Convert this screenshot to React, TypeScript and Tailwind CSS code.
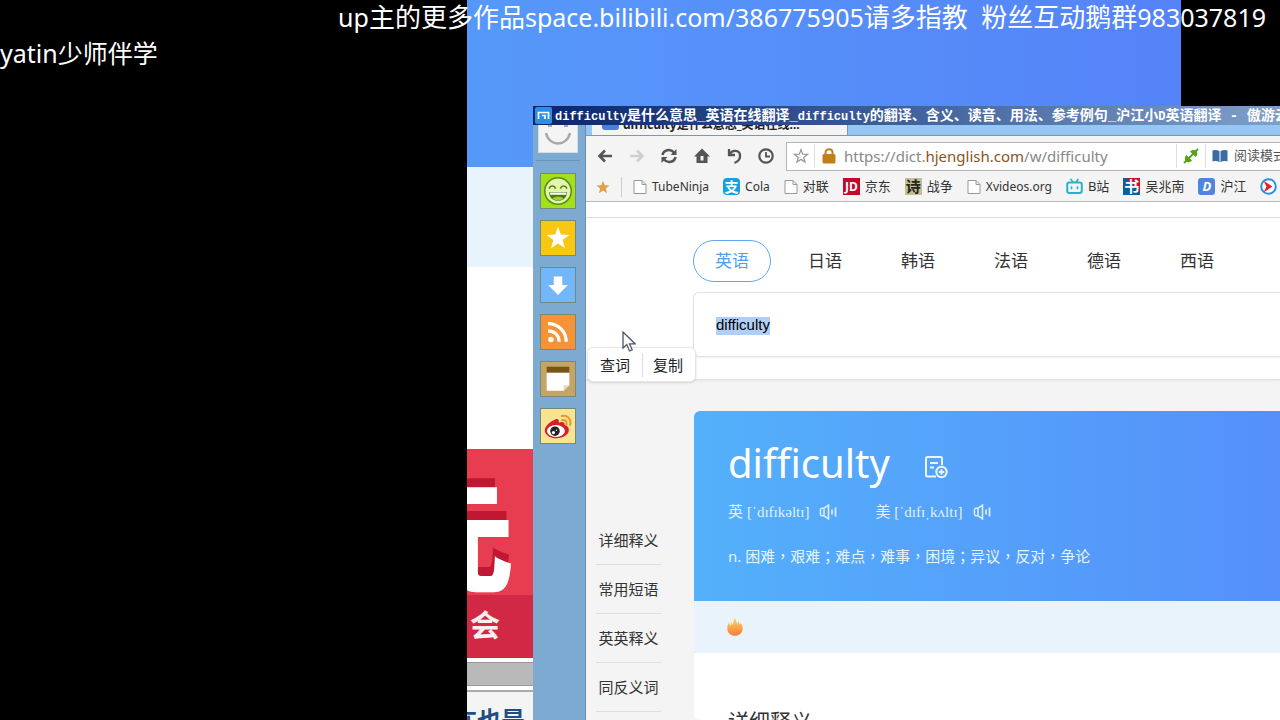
import type { ReactNode } from "react";

const CJK = "font-['Noto_Sans','Noto_Sans_CJK_SC',sans-serif]";

function DocIcon() {
  return (
    <svg viewBox="0 0 14 16" className="h-4 w-3.5 shrink-0" fill="#fff" stroke="#999" strokeWidth="1">
      <path d="M1 1.500h8l4 4v9H1zM9 1.500v4h4" />
    </svg>
  );
}

function SmileBox() {
  return (
    <svg viewBox="0 0 36 36" className="size-full">
      <circle cx="18" cy="18" r="14" fill="#e3f7ab" stroke="#5c8a1f" strokeWidth="1.600" />
      <path d="M8.500 15.500c1.500-3.600 5.500-3.600 7 0M20.500 15.500c1.500-3.600 5.500-3.600 7 0" fill="none" stroke="#55801c" strokeWidth="1.600" />
      <path d="M8.500 19h19c0 6-4 9.300-9.500 9.300S8.500 25 8.500 19z" fill="#4c7a14" />
      <path d="M9.200 19.500h17.600v2.500H9.600z" fill="#fff" />
      <path d="M12 26c3-2.500 9-2.500 12 0-3 2.600-9 2.600-12 0z" fill="#9ed03c" />
    </svg>
  );
}

function StarBox() {
  return (
    <svg viewBox="0 0 36 36" className="size-full">
      <path fill="#fff" d="M18 6l3 8.400 9 .3-7.100 5.500 2.500 8.600L18 23.800l-7.400 5 2.500-8.600L6 14.700l9-.3z" />
    </svg>
  );
}

function DownBox() {
  return (
    <svg viewBox="0 0 36 36" className="size-full">
      <path fill="#fff" d="M13.500 9h9v9h6L18 28.500 7.500 18h6z" />
    </svg>
  );
}

function FeedBox() {
  return (
    <svg viewBox="0 0 36 36" className="size-full" fill="none" stroke="#fff" strokeWidth="3.400">
      <circle cx="10.500" cy="26" r="2.900" fill="#fff" stroke="none" />
      <path d="M7.500 16.700c7 0 11.700 4.700 11.700 11.700M7.500 9.200c11 0 19.200 8.200 19.200 19.200" />
    </svg>
  );
}

function NoteBox() {
  return (
    <svg viewBox="0 0 36 36" className="size-full">
      <path fill="#7a5414" d="M6 5h24v6.500H6z" />
      <path fill="#fff" d="M6 11.500h24v13l-6 6H6z" />
      <path fill="#e3d9c2" d="M30 24.500l-6 6v-6z" />
    </svg>
  );
}

function WeiboBox() {
  return (
    <svg viewBox="0 0 36 36" className="size-full">
      <path fill="#d71f2a" d="M15 11c3-1 4.500.5 3.800 3.500 3-1.400 7-1.200 6.200 2.500 3 .9 4.500 2.600 4.500 5.300 0 4.700-6 8.700-13 8.700S4 27.500 4 22.500C4 18 10.500 12.500 15 11z" />
      <ellipse cx="15.800" cy="23.300" rx="9.500" ry="6.300" fill="#fff" />
      <circle cx="14.800" cy="23.500" r="5" fill="#222" />
      <circle cx="13.200" cy="25" r="1.700" fill="#fff" />
      <circle cx="16.400" cy="22.600" r=".8" fill="#fff" />
      <path d="M22.500 11.800c3.200-.6 5.300 1.600 4.500 4.800M22 7.500c6.300-1.400 10.500 3.300 8.800 9.300" fill="none" stroke="#e69a2e" strokeWidth="2.200" strokeLinecap="round" />
    </svg>
  );
}

const launchers: { label: string; tone: string; icon: ReactNode }[] = [
  { label: "表情", tone: "bg-[#a3e01c]", icon: <SmileBox /> },
  { label: "收藏", tone: "bg-[#f8c712]", icon: <StarBox /> },
  { label: "下载", tone: "bg-[#73b6fb]", icon: <DownBox /> },
  { label: "订阅", tone: "bg-[#f59336]", icon: <FeedBox /> },
  { label: "笔记", tone: "bg-[#c4a565]", icon: <NoteBox /> },
  { label: "微博", tone: "bg-[#fbe391]", icon: <WeiboBox /> },
];

function Launcher() {
  return (
    <aside className="flex w-[53px] shrink-0 flex-col items-center border-r border-[#6c8fb0] bg-[#7caad1] pr-0.5">
      <div className="flex h-7 w-10 shrink-0 justify-center border border-t-0 border-[#d5dde4] bg-[#f4f4f4]">
        <svg viewBox="0 0 40 28" className="h-7 w-10 shrink-0" fill="none" stroke="#a9a9a9">
          <path d="M8 8c3 14 21 14 24 0" strokeWidth="2.500" />
          <path d="M12 0v2M28 0v2" strokeWidth="4" />
        </svg>
      </div>
      <div className="mt-[7px] mb-3 h-px w-11 shrink-0 bg-[#6b93b8]" />
      <div className="flex flex-col gap-[11px]">
        {launchers.map((l) => (
          <button key={l.label} aria-label={l.label} className={`size-9 shrink-0 border border-[#748a78] ${l.tone}`}>
            {l.icon}
          </button>
        ))}
      </div>
    </aside>
  );
}

function TitleBar() {
  return (
    <header className="flex h-[19px] shrink-0 items-center overflow-hidden bg-linear-to-r from-[#0a246a] to-[#7f9fca] pl-0.5 whitespace-nowrap text-white">
      <svg viewBox="0 0 17 17" className="mr-[3px] size-[17px] shrink-0">
        <rect width="17" height="17" rx="2" fill="#2b8fe6" />
        <path d="M3.500 12V5.500h10V12M10 12V8.500H7" fill="none" stroke="#fff" strokeWidth="1.700" />
      </svg>
      <h2 className="pt-0.5 font-['Liberation_Mono','Noto_Sans_CJK_SC',monospace] text-[14px] leading-[17px] font-bold">
        <span className="text-[12px]">difficulty</span>是什么意思_英语在线翻译_
        <span className="text-[12px]">difficulty</span>的翻译、含义、读音、用法、参考例句_沪江小<span className="text-[12px]">D</span>英语翻译 - 傲游云浏览器
      </h2>
    </header>
  );
}

function TabStrip() {
  return (
    <div className="flex h-[11px] shrink-0 overflow-hidden border-b border-[#7d97ae] bg-[#95c7f5] pl-1.5">
      <div className="-mb-px flex h-[11px] w-64 items-end gap-1 overflow-hidden border-r border-[#7d97ae] bg-[#f4f4f4] pl-2.5 text-[12px] leading-[18px] font-bold whitespace-nowrap text-[#222]">
        <svg viewBox="0 0 17 17" className="mb-1.5 size-[17px] shrink-0">
          <rect width="17" height="17" rx="3" fill="#4a7fdc" />
        </svg>
        <span className="mb-0.5">difficulty是什么意思_英语在线...</span>
      </div>
    </div>
  );
}

function ToolButton({ label, dim, children }: { label: string; dim?: boolean; children: ReactNode }) {
  return (
    <button aria-label={label} className={dim ? "text-[#cfcfcf]" : "text-[#555]"}>
      <svg viewBox="0 0 18 18" className="size-[18px]" fill="none" stroke="currentColor" strokeWidth="2.600">
        {children}
      </svg>
    </button>
  );
}

function Toolbar() {
  return (
    <div className="flex h-9 shrink-0 items-center bg-[#f4f4f4] pt-1 pl-2.5">
      <div className="mr-3 flex gap-3.5">
        <ToolButton label="后退">
          <path d="M16 9H4M9 3.500L3.500 9 9 14.500" />
        </ToolButton>
        <ToolButton label="前进" dim>
          <path d="M2 9h12M9 3.500L14.500 9 9 14.500" />
        </ToolButton>
        <ToolButton label="刷新">
          <path d="M2.500 8C3.500 2.500 10.500 1.500 14 5.500M15.500 10c-1 5.500-8 6.500-11.500 2.500" />
          <path d="M16.500 2v6h-6zM1.500 16v-6h6z" fill="currentColor" stroke="none" />
        </ToolButton>
        <ToolButton label="主页">
          <path d="M10 1.500l8 8h-2.500V16h-11V9.500H2z" fill="currentColor" stroke="none" />
          <path d="M8.500 9h3v4.500h-3z" fill="#f4f4f4" stroke="none" />
        </ToolButton>
        <ToolButton label="恢复">
          <path d="M5 2v6h6M5 8C8 2 15.500 3 16 8c.5 4-1.500 6.500-5.500 8" strokeWidth="2.300" />
        </ToolButton>
        <ToolButton label="历史">
          <circle cx="10" cy="9" r="6.700" strokeWidth="2.200" />
          <path d="M10 5v4.500h4" strokeWidth="1.800" />
        </ToolButton>
      </div>
      <div className="flex h-[29px] min-w-0 flex-1 items-center border border-r-0 border-[#b5b5b5] bg-white">
        <button aria-label="收藏" className="flex h-6 w-7 shrink-0 items-center justify-center border-r border-[#ddd]">
          <svg viewBox="0 0 16 16" className="size-4" fill="none" stroke="#999" strokeWidth="1.300">
            <path d="M8 1.700l1.700 4.500 4.800.2-3.800 3 1.300 4.600-4-2.600L4 14l1.300-4.600-3.800-3 4.800-.2z" />
          </svg>
        </button>
        <svg viewBox="0 0 14 16" className="mx-[7px] h-4 w-3.5 shrink-0">
          <path d="M3.500 8V4.500c0-4.300 7-4.300 7 0V8" fill="none" stroke="#c17f1c" strokeWidth="2" />
          <rect x=".5" y="6" width="13" height="9.500" rx="1.500" fill="#c17f1c" />
        </svg>
        <p className="min-w-0 flex-1 truncate pl-px text-[15px] text-[#888]">
          https://dict.<span className="text-[#8a5523]">hjenglish.com</span>/w/difficulty
        </p>
        <button aria-label="扩展" className="flex h-6 w-[30px] shrink-0 items-center justify-center border-x border-[#ddd]">
          <svg viewBox="0 0 16 16" className="size-4">
            <path d="M1 15L15 1" stroke="#58a11e" strokeWidth="1.800" />
            <path d="M7 3.500l5.500 5.500c2-1.500 2.300-4 1-6.200C11.500 1.500 8.500 1.500 7 3.500zM3.500 7L9 12.500c-1.500 2-4 2.300-6.200 1C1.500 11 1.500 8.500 3.500 7z" fill="#58a11e" />
          </svg>
        </button>
        <button className="flex w-[74px] shrink-0 items-center gap-1.5 overflow-hidden pl-1.5 text-[13px] whitespace-nowrap text-[#555]">
          <svg viewBox="0 0 16 14" className="h-3.5 w-4 shrink-0" fill="#3b6ba5">
            <path d="M.5 1.500c2.500-1 5-.7 7 .7v11c-2-1.300-4.500-1.500-7-.7zM15.500 1.500c-2.500-1-5-.7-7 .7v11c2-1.300 4.500-1.500 7-.7z" />
          </svg>
          阅读模式
        </button>
      </div>
    </div>
  );
}

const bookmarks: { name: string; icon: ReactNode }[] = [
  { name: "TubeNinja", icon: <DocIcon /> },
  {
    name: "Cola",
    icon: (
      <span className="flex size-[17px] items-center justify-center rounded-sm bg-[#14a0e0] text-[14px] leading-none font-bold text-white">支</span>
    ),
  },
  { name: "对联", icon: <DocIcon /> },
  {
    name: "京东",
    icon: <span className="flex size-[17px] items-center justify-center bg-[#c3082a] text-[12px] leading-none font-bold text-white">JD</span>,
  },
  {
    name: "战争",
    icon: <span className="flex size-[17px] items-center justify-center bg-[#c6bd94] text-[15px] leading-none font-bold text-[#23281c]">诗</span>,
  },
  { name: "Xvideos.org", icon: <DocIcon /> },
  {
    name: "B站",
    icon: (
      <svg viewBox="0 0 17 17" className="size-[17px]" fill="none" stroke="#27b1cc" strokeWidth="2" strokeLinecap="round">
        <rect x="1.200" y="4.500" width="14.600" height="10.500" rx="2.200" />
        <path d="M5 1.500l2 2.500M12 1.500L10 4M5.500 9v1.500M11.500 9v1.500" strokeWidth="1.700" />
      </svg>
    ),
  },
  {
    name: "吴兆南",
    icon: (
      <span className="flex size-[17px] items-center justify-center bg-linear-to-tr from-[#0b5f9e] from-60% to-[#d01030] to-60% text-[15px] leading-none font-bold text-white">书</span>
    ),
  },
  {
    name: "沪江",
    icon: (
      <span className="flex size-[17px] items-center justify-center rounded-[3px] bg-[#4f86dd] text-[13px] leading-none font-bold text-white italic">D</span>
    ),
  },
  {
    name: "杨",
    icon: (
      <svg viewBox="0 0 17 17" className="size-[17px]">
        <circle cx="8.500" cy="8.500" r="7.300" fill="#fff" stroke="#2b8fe0" strokeWidth="2" />
        <path d="M5.500 5l5.500 3.500-5.500 3.700 1.800-3.700z" fill="#e5202c" stroke="#e5202c" strokeWidth="1.500" />
      </svg>
    ),
  },
];

function Bookmarks() {
  return (
    <nav aria-label="书签" className="flex h-[30px] shrink-0 items-center overflow-hidden border-b border-[#b9b9b9] bg-[#f4f4f4] pl-2.5 text-[12px] whitespace-nowrap text-[#333]">
      <svg viewBox="0 0 16 16" className="size-3.5 shrink-0" fill="#dc9f4a">
        <path d="M8 .8l2 5.200 5.500.2-4.300 3.400 1.500 5.400L8 11.900 3.300 15l1.500-5.400L.5 6.200 6 6z" />
      </svg>
      <div className="mx-[11px] h-5 w-px shrink-0 bg-[#ccc]" />
      <div className="flex gap-3.5">
        {bookmarks.map((b) => (
          <a key={b.name} href="#" className="flex shrink-0 items-center gap-[5px]">
            {b.icon}
            <span className={/^[TCX]/.test(b.name) ? "text-[12px]" : "text-[13px]"}>{b.name}</span>
          </a>
        ))}
      </div>
    </nav>
  );
}

function Speaker() {
  return (
    <button aria-label="发音">
      <svg viewBox="0 0 18 16" className="h-4 w-[18px]" fill="none" stroke="#d8ecff" strokeWidth="1.600">
        <path d="M5 4.200H2.500c-1.500 0-1.500 7.600 0 7.600H5zM5 4.200l4.500-3v13.600l-4.500-3" />
        <path d="M13 5.500v5M16.500 3.500v9" strokeWidth="1.800" />
      </svg>
    </button>
  );
}

const languages = ["日语", "韩语", "法语", "德语", "西语"];
const sections = ["详细释义", "常用短语", "英英释义", "同反义词"];

function DictionaryPage() {
  return (
    <main className="relative flex min-h-0 flex-1 flex-col overflow-hidden bg-[#f4f4f4]">
      <div className="shrink-0 border-b border-[#e2e2e2] bg-white pt-[15px] shadow-xs">
        <div className="border-t border-[#dedede] pt-[22px] pl-[107px]">
          <div className="flex gap-[15px] text-[17px] leading-10 whitespace-nowrap text-[#333]">
            <button className="w-[78px] shrink-0 rounded-full border border-[#5fa8ee] text-[#4f9ff0]">英语</button>
            {languages.map((l) => (
              <button key={l} className="w-[78px] shrink-0 border border-transparent">
                {l}
              </button>
            ))}
          </div>
          <div className="mt-2.5 mb-[22px] flex h-[65px] items-center rounded-l-md border border-r-0 border-[#e2e2e2] pt-0.5 pl-[22px] shadow-xs">
            <input
              aria-label="查询单词"
              defaultValue="difficulty"
              className="h-[18px] field-sizing-content bg-[#b0cff6] font-['Liberation_Sans',sans-serif] text-[15px] text-black"
            />
          </div>
        </div>
      </div>
      <div className="flex min-h-0 flex-1 pl-2.5">
        <nav aria-label="章节" className="mr-[33px] w-[65px] shrink-0 pt-[136px] text-[15px] text-[#333]">
          {sections.map((s) => (
            <a key={s} href="#" className="flex h-[49px] items-center justify-center border-b border-[#dedede] whitespace-nowrap">
              {s}
            </a>
          ))}
        </nav>
        <article className="mt-[31px] min-w-0 flex-1 rounded-l-md bg-white">
          <section className="h-[190px] overflow-hidden rounded-tl-md bg-linear-to-r from-[#54b0fb] to-[#5590fa] pl-[34px] text-white">
            <div className="flex items-center gap-[34px] pt-6">
              <h1 className="text-[40px] leading-[56px] [font-variant-ligatures:none]">difficulty</h1>
              <button aria-label="添加生词" className="pt-2">
                <svg viewBox="0 0 24 24" className="size-6" fill="none" stroke="#eaf5ff" strokeWidth="2">
                  <path d="M12 21.500H3.500a1.500 1.500 0 0 1-1.500-1.500V3.500A1.500 1.500 0 0 1 3.500 2h13A1.500 1.500 0 0 1 18 3.500V10M6 8h8M6 12.500h4" />
                  <circle cx="17.500" cy="17" r="5.200" />
                  <path d="M17.500 14.300v5.400M14.800 17h5.400" />
                </svg>
              </button>
            </div>
            <div className="mt-[9px] flex h-6 items-center text-[15px] whitespace-nowrap text-[#e0f0ff]">
              <span>
                英 <span className="font-['Liberation_Serif',serif] [font-variant-ligatures:none]">[ˈdɪfɪkəltɪ]</span>
              </span>
              <span className="mr-[38px] ml-2.5 flex">
                <Speaker />
              </span>
              <span>
                美 <span className="font-['Liberation_Serif',serif] [font-variant-ligatures:none]">[ˈdɪfɪˌkʌltɪ]</span>
              </span>
              <span className="ml-2.5 flex">
                <Speaker />
              </span>
            </div>
            <p className="mt-5 font-['Noto_Sans','Noto_Sans_CJK_TC',sans-serif] text-[15px] leading-6 whitespace-nowrap text-[#e6f4ff]">
              n. 困难，艰难；难点，难事，困境；异议，反对，争论
            </p>
          </section>
          <div className="flex h-[52px] items-center bg-[#e9f3fc] pl-8">
            <svg viewBox="0 0 18 20" className="size-[18px]">
              <defs>
                <linearGradient id="flame" x1="0" y1="0" x2="0" y2="1">
                  <stop offset="0" stopColor="#fbd75c" />
                  <stop offset="1" stopColor="#f57c3c" />
                </linearGradient>
              </defs>
              <path fill="url(#flame)" d="M8.500 0c2 2 1.800 5 3 6.500.8-.8 1-2 .7-3.500 1.300.8 1.700 2.500 2 4 .6-.2.900-.8 1-1.500C17 8 18 10 17.500 12.500 17 17 13.500 19.800 9 19.800S1 17 .5 12.500C.2 9.500 1 7 2.500 4.500c0 2 .2 3 1.200 4.500.8-1 .8-4 1-5 .5 1 .8 2.500 1.500 4C7 5.500 7.500 3 8.500 0z" />
            </svg>
          </div>
          <h3 className="pt-[52px] pl-[34px] text-[21px] leading-8 text-[#333]">详细释义</h3>
        </article>
      </div>
      <div className="absolute top-[145px] left-px flex h-[35px] items-center rounded-md border border-[#e6e6e6] bg-white text-[15px] text-[#222] shadow-sm">
        <button className="border-r border-[#ddd] px-3 leading-6 whitespace-nowrap">查词</button>
        <button className="px-2.5 pr-3 leading-6 whitespace-nowrap">复制</button>
      </div>
      <svg viewBox="0 0 14 21" className="absolute top-[129px] left-9 h-[21px] w-3.5" fill="#fff" stroke="#4b5563" strokeWidth="1.300">
        <path d="M1 1v16l3.800-3.500L7.500 20l2.700-1.200-2.700-6H13z" />
      </svg>
    </main>
  );
}

function BackdropPage() {
  return (
    <div className="absolute inset-y-0 right-[99px] left-[467px] flex flex-col overflow-hidden bg-white">
      <div className="h-[167px] shrink-0 bg-linear-to-r from-[#5698fa] to-[#5583f8]" />
      <div className="h-[100px] shrink-0 bg-[#e9f3fc]" />
      <div className="mt-[182px] h-[146px] shrink-0 overflow-hidden bg-[#e83d50]">
        <p className="-ml-[73px] pt-[30px] text-[120px] leading-[116px] font-black text-white [text-shadow:-2px_-9px_0_#c01733]">元</p>
      </div>
      <div className="h-[63px] shrink-0 bg-[#d12845] pl-[3px] text-[30px] leading-[60px] font-bold text-[#fdeef0]">会</div>
      <div className="mt-1 h-6 shrink-0 border-y border-[#999] bg-[#b9b9b9]" />
      <div className="mt-1 shrink-0 border-t-2 border-[#aaa] bg-[#f4f4f4] pt-3 text-[24px] leading-8 font-bold text-[#1f4f82]">
        <p className="-ml-3.5 whitespace-nowrap">在也是</p>
      </div>
    </div>
  );
}

export default function App() {
  return (
    <div className={`relative h-screen overflow-hidden bg-black ${CJK}`}>
      <BackdropPage />
      <div className="absolute inset-y-0 top-[106px] right-0 left-[533px] flex flex-col overflow-hidden">
        <TitleBar />
        <div className="flex min-h-0 flex-1">
          <Launcher />
          <div className="flex min-w-0 flex-1 flex-col">
            <TabStrip />
            <Toolbar />
            <Bookmarks />
            <DictionaryPage />
          </div>
        </div>
      </div>
      <div className="relative text-[25px] leading-9 whitespace-pre text-white">
        <p className="h-[35px] pr-3.5 text-right leading-[34px]">
          up<span className="text-[26px]">主的更多作品</span>space.bilibili.com/386775905
          <span className="text-[26px]">请多指教{"  "}粉丝互动鹅群</span>983037819
        </p>
        <p>yatin少师伴学</p>
      </div>
    </div>
  );
}
